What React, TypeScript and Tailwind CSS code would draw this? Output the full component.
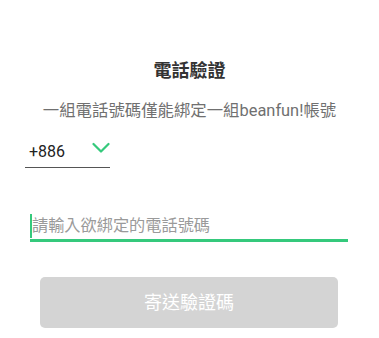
export default function App() {
  return (
    <div className="w-[379px] h-[338px] bg-white font-['Roboto','Noto_Sans_CJK_TC',sans-serif]">
      <h1 className="pt-[58px] text-center text-[18px] leading-[26px] font-bold text-[#333]">電話驗證</h1>
      <p className="mt-[15px] text-center text-[16.4px] leading-[24px] text-[#707070]">
        一組電話號碼僅能綁定一組beanfun!帳號
      </p>

      <div className="ml-[25px] mt-[13px] flex h-[32px] w-[85px] items-center justify-between border-b border-[#555] pl-[4px]">
        <span className="text-[16px] leading-[20px] text-[#222]">+886</span>
        <svg width="18" height="12" viewBox="0 0 18 12" className="mb-[8px]">
          <polyline points="1.5,2 9,9.5 16.5,2" fill="none" stroke="#35c97c" strokeWidth="2.2" strokeLinecap="round" strokeLinejoin="round" />
        </svg>
      </div>

      <div className="mx-[31px] ml-[30px] mt-[44px] flex h-[30px] items-center border-b-[3px] border-[#35c97c]">
        <span className="h-[24px] w-[2px] bg-[#35c97c]" />
        <span className="text-[16.2px] leading-[24px] text-[#9a9a9a]">請輸入欲綁定的電話號碼</span>
      </div>

      <button className="mx-[40px] mt-[35px] flex h-[51px] w-[298px] items-center justify-center rounded-[5px] bg-[#d4d4d4] text-[18px] text-white">
        寄送驗證碼
      </button>
    </div>
  )
}
